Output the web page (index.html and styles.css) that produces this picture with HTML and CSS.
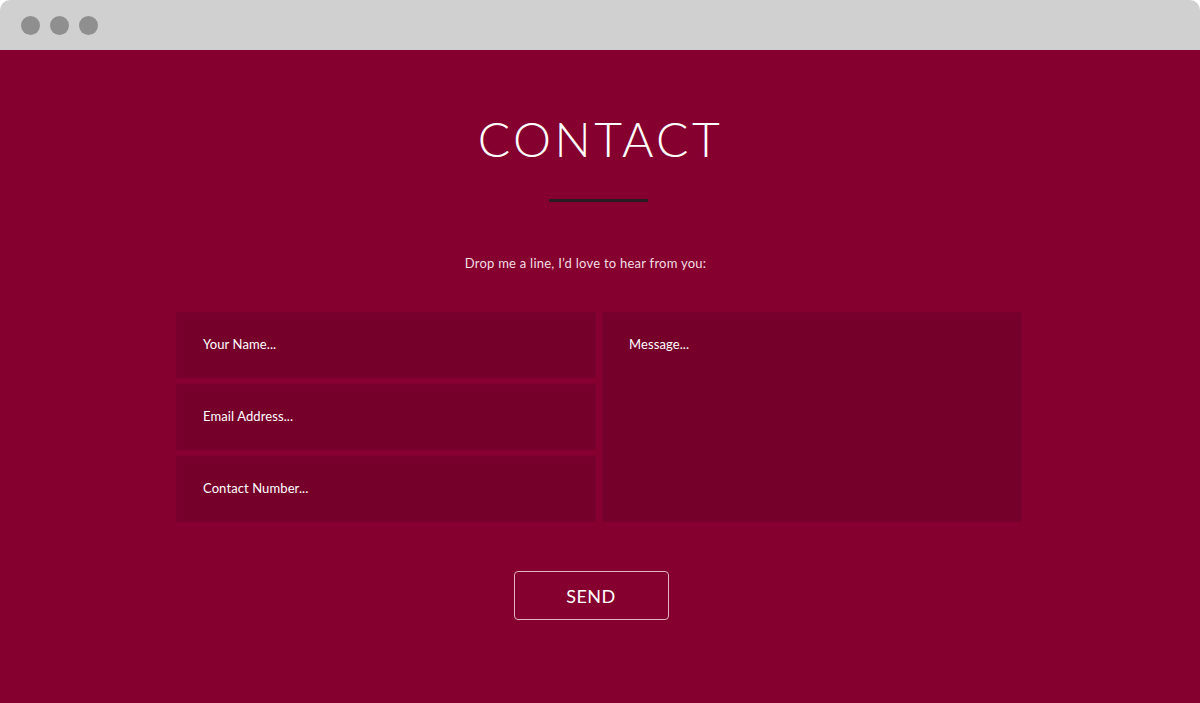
FILE: index.html
```html
<!DOCTYPE html>
<html lang="en">
<head>
<meta charset="utf-8">
<title>Contact</title>
<link rel="stylesheet" href="styles.css">
</head>
<body>
<div class="window">
  <div class="titlebar">
    <span class="dot"></span><span class="dot"></span><span class="dot"></span>
  </div>
  <main class="page">
    <h1 class="title">CONTACT</h1>
    <div class="divider"></div>
    <p class="lead">Drop me a line, I’d love to hear from you:</p>
    <form class="form">
      <div class="fields">
        <div class="field">Your Name...</div>
        <div class="field">Email Address...</div>
        <div class="field">Contact Number...</div>
      </div>
      <div class="field message">Message...</div>
    </form>
    <div class="actions">
      <button class="send" type="button">SEND</button>
    </div>
  </main>
</div>
</body>
</html>
```
FILE: styles.css
```css
html, body {
  margin: 0;
  padding: 0;
  height: 100%;
  background: #ffffff;
}
body {
  font-family: "Lato", "Open Sans", sans-serif;
  overflow: hidden;
}
.window {
  height: 703px;
  display: flex;
  flex-direction: column;
}
.titlebar {
  height: 50px;
  background: #d0d0d1;
  border-radius: 10px 10px 0 0;
  display: flex;
  align-items: center;
  padding-left: 21px;
  gap: 10px;
  flex-shrink: 0;
}
.dot {
  width: 19px;
  height: 19px;
  border-radius: 50%;
  background: #8f8f8f;
}
.page {
  flex: 1;
  background: #85002e;
  display: flex;
  flex-direction: column;
  align-items: center;
  padding-top: 66px;
}
.title {
  margin: 0;
  font-weight: 300;
  font-size: 48px;
  line-height: 46px;
  letter-spacing: 3.4px;
  color: #ffffff;
  padding-left: 1px;
}
.divider {
  width: 99px;
  height: 3px;
  background: #2b1a1f;
  margin-top: 37px;
  margin-right: 3px;
}
.lead {
  margin: 52px 29px 0 0;
  font-size: 13px;
  line-height: 18px;
  color: #f3dde3;
  letter-spacing: 0.25px;
}
.form {
  margin: 40px 2px 0 0;
  width: 846px;
  display: grid;
  grid-template-columns: 420px 420px;
  gap: 6px;
}
.fields {
  display: grid;
  grid-template-rows: 66px 66px 66px;
  gap: 6px;
}
.field {
  background: #75002a;
  box-shadow: inset 0 0 0 1px #7a002d;
  color: #ffffff;
  font-size: 13px;
  line-height: 18px;
  letter-spacing: 0.1px;
  padding: 23px 27px 0;
}
.actions {
  margin: 49px 18px 0 0;
}
.send {
  width: 155px;
  height: 49px;
  background: transparent;
  border: 1px solid #e3b3c1;
  border-radius: 4px;
  color: #ffffff;
  font-family: "Lato", "Open Sans", sans-serif;
  font-size: 18px;
  font-weight: 400;
  letter-spacing: 0.5px;
  cursor: pointer;
}
```
